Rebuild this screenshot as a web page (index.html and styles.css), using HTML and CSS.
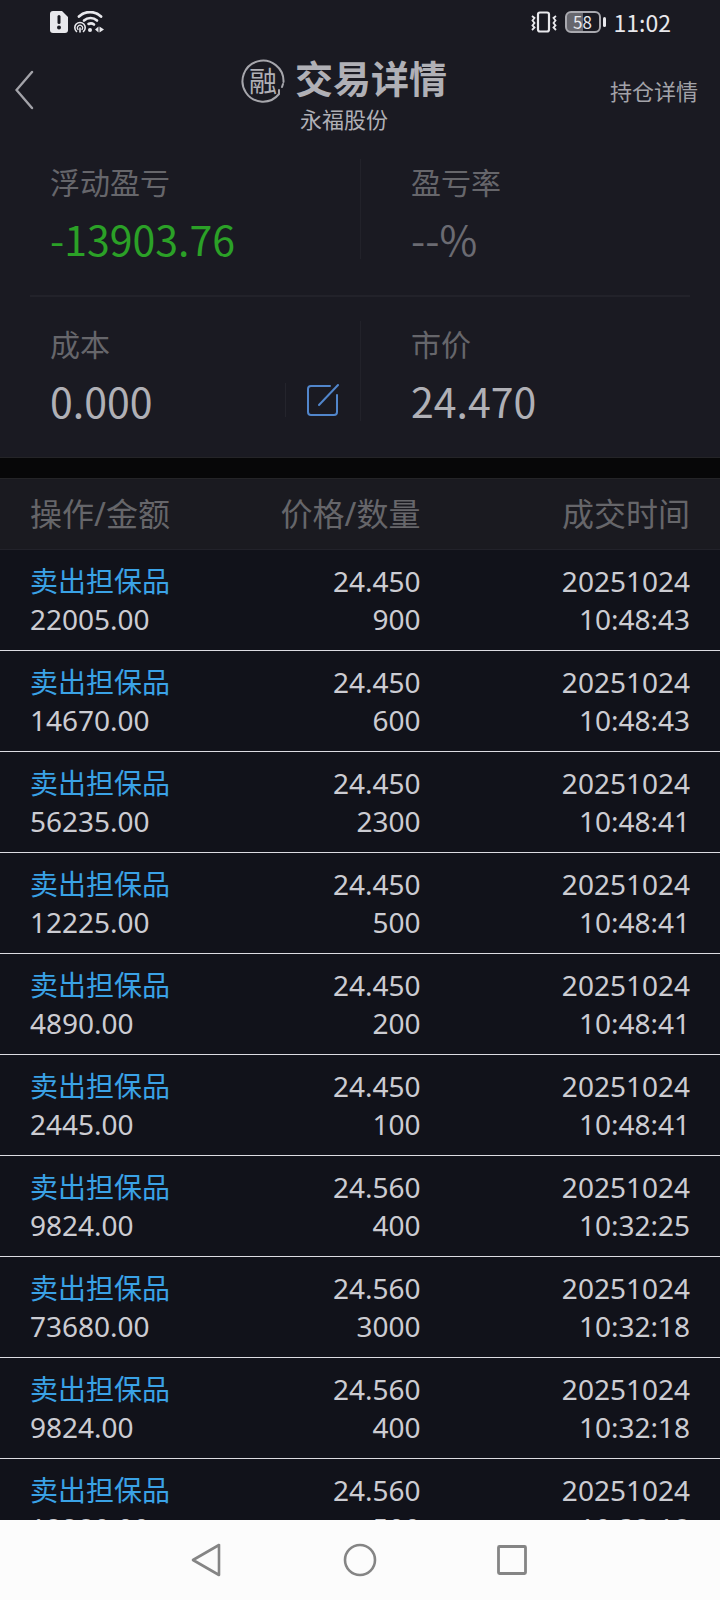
FILE: index.html
```html
<!DOCTYPE html>
<html lang="zh-CN">
<head>
    <meta charset="UTF-8">
    <meta name="viewport" content="width=device-width, initial-scale=1.0">
    <title>交易详情</title>
    <link rel="stylesheet" href="styles.css">
</head>
<body>

<div class="status-bar">
    <div class="status-group">
        <svg width="18" height="22" viewBox="0 0 18 22">
            <path d="M3 0h9l6 6v13a3 3 0 0 1-3 3H3a3 3 0 0 1-3-3V3a3 3 0 0 1 3-3z" fill="#e8e8ec"/>
            <path d="M9 5.500v6" stroke="#1a1a22" stroke-width="3" stroke-linecap="round"/>
            <circle cx="9" cy="16.500" r="2" fill="#1a1a22"/>
        </svg>
        <svg width="30" height="22" viewBox="0 0 30 22" fill="none" stroke="#e8e8ec" stroke-linecap="round">
            <path d="M5 5.500a16 16 0 0 1 22 0" stroke-width="2.800"/>
            <path d="M10 9.500a9.500 9.500 0 0 1 13 0" stroke-width="2.600"/>
            <path d="M14.500 13a5 5 0 0 1 5.500 .500" stroke-width="2.600"/>
            <circle cx="16" cy="19" r="2" fill="#e8e8ec" stroke="none"/>
            <path d="M2.500 20.500a5.200 5.200 0 1 1 7 0" stroke-width="1.600"/>
            <path d="M4 18.500a2.600 2.600 0 1 1 4 0" stroke-width="1.200"/>
            <path d="M6 17v4" stroke-width="1.600"/>
            <path d="M24.500 15.500v6l-3.500-3zM25.500 15.500v6l4.500-3z" fill="#e8e8ec" stroke="none"/>
        </svg>
    </div>
    <div class="status-group">
        <svg width="26" height="22" viewBox="0 0 26 22" fill="none" stroke="#e8e8ec">
            <rect x="7" y="1.500" width="11" height="19" rx="2" stroke-width="2.200"/>
            <path d="M1 5l2.500 2-2 2.500 2 2.500-2 2.500 2 2L1 19M25 5l-2.500 2 2 2.500-2 2.500 2 2.500-2 2 2.500 2.500" stroke-width="1.800"/>
        </svg>
        <div class="battery"><span class="battery-level">58</span></div>
        <span class="time">11:02</span>
    </div>
</div>

<header class="title-bar">
    <button class="back" aria-label="返回">
        <svg width="20" height="40" viewBox="0 0 20 40" fill="none" stroke="#a3a3a9" stroke-width="2.400" stroke-linecap="round">
            <path d="M17 2L1.500 20L17 38"/>
        </svg>
    </button>
    <div class="heading">
        <div class="heading-line">
            <span class="badge">
                <svg class="badge-ring" width="44" height="44" viewBox="0 0 44 44" fill="none" stroke="#a6a6ac" stroke-width="2" stroke-linecap="round">
                    <path d="M42.500 23A20.500 20.500 0 1 0 38 35v-4"/>
                    <path d="M42 25l-1 3"/>
                </svg>
                融
            </span>
            <h1>交易详情</h1>
        </div>
        <p class="stock">永福股份</p>
    </div>
    <a class="detail-link" href="#">持仓详情</a>
</header>

<section class="summary">
    <div class="summary-row">
        <div class="cell">
            <span class="label">浮动盈亏</span>
            <span class="value down">-13903.76</span>
        </div>
        <div class="cell">
            <span class="label">盈亏率</span>
            <span class="value none">--%</span>
        </div>
    </div>
    <div class="summary-row">
        <div class="cell">
            <span class="label">成本</span>
            <div class="cost">
                <span class="value">0.000</span>
                <button class="edit" aria-label="修改成本">
                    <svg width="34" height="34" viewBox="0 0 34 34" fill="none" stroke="#5186cc" stroke-width="2" stroke-linecap="round">
                        <path d="M24 3H5a3 3 0 0 0-3 3v23a3 3 0 0 0 3 3h23a3 3 0 0 0 3-3V12"/>
                        <path d="M13 22L32 2"/>
                    </svg>
                </button>
            </div>
        </div>
        <div class="cell">
            <span class="label">市价</span>
            <span class="value">24.470</span>
        </div>
    </div>
</section>

<main class="list">
    <table class="trades">
        <thead>
            <tr>
                <th>操作/金额</th>
                <th>价格/数量</th>
                <th>成交时间</th>
            </tr>
        </thead>
        <tbody>
            <tr>
                <td><span class="action">卖出担保品</span><br>22005.00</td>
                <td>24.450<br>900</td>
                <td>20251024<br>10:48:43</td>
            </tr>
            <tr>
                <td><span class="action">卖出担保品</span><br>14670.00</td>
                <td>24.450<br>600</td>
                <td>20251024<br>10:48:43</td>
            </tr>
            <tr>
                <td><span class="action">卖出担保品</span><br>56235.00</td>
                <td>24.450<br>2300</td>
                <td>20251024<br>10:48:41</td>
            </tr>
            <tr>
                <td><span class="action">卖出担保品</span><br>12225.00</td>
                <td>24.450<br>500</td>
                <td>20251024<br>10:48:41</td>
            </tr>
            <tr>
                <td><span class="action">卖出担保品</span><br>4890.00</td>
                <td>24.450<br>200</td>
                <td>20251024<br>10:48:41</td>
            </tr>
            <tr>
                <td><span class="action">卖出担保品</span><br>2445.00</td>
                <td>24.450<br>100</td>
                <td>20251024<br>10:48:41</td>
            </tr>
            <tr>
                <td><span class="action">卖出担保品</span><br>9824.00</td>
                <td>24.560<br>400</td>
                <td>20251024<br>10:32:25</td>
            </tr>
            <tr>
                <td><span class="action">卖出担保品</span><br>73680.00</td>
                <td>24.560<br>3000</td>
                <td>20251024<br>10:32:18</td>
            </tr>
            <tr>
                <td><span class="action">卖出担保品</span><br>9824.00</td>
                <td>24.560<br>400</td>
                <td>20251024<br>10:32:18</td>
            </tr>
            <tr>
                <td><span class="action">卖出担保品</span><br>12280.00</td>
                <td>24.560<br>500</td>
                <td>20251024<br>10:32:18</td>
            </tr>
        </tbody>
    </table>
</main>

<nav class="nav-bar">
    <button aria-label="后退">
        <svg width="34" height="34" viewBox="0 0 34 34" fill="none" stroke="#858585" stroke-width="2.600" stroke-linejoin="round">
            <path d="M28 2v30L2 17z"/>
        </svg>
    </button>
    <button aria-label="主页">
        <svg width="34" height="34" viewBox="0 0 34 34" fill="none" stroke="#858585" stroke-width="2.600">
            <circle cx="17" cy="17" r="15"/>
        </svg>
    </button>
    <button aria-label="最近任务">
        <svg width="34" height="34" viewBox="0 0 34 34" fill="none" stroke="#858585" stroke-width="2.800">
            <rect x="3.500" y="3.500" width="27" height="27" rx="1"/>
        </svg>
    </button>
</nav>

</body>
</html>
```
FILE: styles.css
```css
* {
    box-sizing: border-box;
}
body {
    display: flex;
    flex-direction: column;
    height: 100vh;
    margin: 0;
    background-color: #1a1a22;
    color: #b0b0b6;
    font-family: "Noto Sans CJK SC", "Noto Sans", sans-serif;
}
button {
    display: flex;
    padding: 0;
    border: none;
    background: none;
    cursor: pointer;
}
svg {
    display: block;
}

/* System status bar */
.status-bar {
    display: flex;
    justify-content: space-between;
    align-items: center;
    height: 44px;
    padding: 0 49px 0 50px;
    color: #e8e8ec;
}
.status-group {
    display: flex;
    align-items: center;
    gap: 6px;
}
.battery {
    display: flex;
    align-items: center;
    gap: 2px;
    margin: 0 2px;
}
.battery::after {
    content: "";
    width: 3px;
    height: 10px;
    border-radius: 2px;
    background-color: #e8e8ec;
}
.battery-level {
    width: 36px;
    border: 2px solid #a9a9af;
    border-radius: 6px;
    background: linear-gradient(to right, #66666d 50%, #1a1a22 50%);
    font-size: 17px;
    line-height: 18px;
    text-align: center;
}
.time {
    font-size: 23px;
    line-height: 32px;
}

/* Title bar */
.title-bar {
    display: flex;
    align-items: center;
    height: 92px;
}
.back {
    width: 88px;
    padding-left: 15px;
}
.heading {
    flex: 1;
    padding-top: 6px;
    text-align: center;
}
.heading-line {
    display: flex;
    justify-content: center;
    align-items: center;
    gap: 10px;
}
.badge {
    position: relative;
    width: 44px;
    margin-top: 6px;
    font-size: 28px;
    line-height: 42px;
}
.badge-ring {
    position: absolute;
    top: 0;
    left: 0;
}
h1 {
    margin: 0;
    font-size: 38px;
    font-weight: bold;
    line-height: 50px;
}
.stock {
    margin: 0;
    font-size: 22px;
    line-height: 32px;
}
.detail-link {
    width: 120px;
    padding-right: 22px;
    color: #a3a3a9;
    font-size: 22px;
    text-align: right;
    text-decoration: none;
}

/* Profit and price overview */
.summary {
    border-bottom: 1px solid #242427;
}
.summary-row {
    display: grid;
    grid-template-columns: 1fr 1fr;
    margin: 0 30px;
    padding: 23px 0 36px;
}
.summary-row + .summary-row {
    padding: 24px 0 36px;
    border-top: 2px solid #22222a;
}
.cell {
    display: flex;
    flex-direction: column;
    gap: 14px;
    padding-left: 20px;
}
.cell + .cell {
    padding-left: 50px;
    border-left: 1px solid #22222a;
}
.label {
    color: #66666b;
    font-size: 30px;
    line-height: 44px;
}
.value {
    font-size: 41px;
    line-height: 42px;
}
.down {
    color: #2ba127;
}
.none {
    color: #6b6b72;
}
.cost {
    display: flex;
    justify-content: space-between;
    align-items: center;
}
.edit {
    padding: 0 20px;
    border-left: 1px solid #24242c;
}

/* Trade list */
.list {
    flex: 1;
    overflow: hidden;
    min-height: 0;
    border-top: 20px solid #070708;
    background-color: #11121a;
}
.trades {
    width: 100%;
    border-collapse: collapse;
    table-layout: fixed;
    font-family: "Noto Sans", "Noto Sans CJK SC", sans-serif;
}
th, td {
    padding: 12px 0;
    text-align: right;
}
th:first-child, td:first-child {
    width: 30%;
    padding-left: 30px;
    text-align: left;
}
th:last-child, td:last-child {
    width: 41.600%;
    padding-right: 30px;
}
th {
    height: 71px;
    border-top: 1px solid #242427;
    border-bottom: 1px solid #22222a;
    background-color: #1a1a20;
    color: #66666a;
    font-size: 32px;
    font-weight: normal;
    line-height: 46px;
}
td {
    border-bottom: 1px solid #dcdce2;
    color: #ccccd2;
    font-size: 28px;
    line-height: 38px;
}
.action {
    color: #3aa2e6;
}

/* System navigation */
.nav-bar {
    display: flex;
    justify-content: center;
    align-items: center;
    gap: 118px;
    height: 80px;
    background-color: #fcfcfc;
}
```
